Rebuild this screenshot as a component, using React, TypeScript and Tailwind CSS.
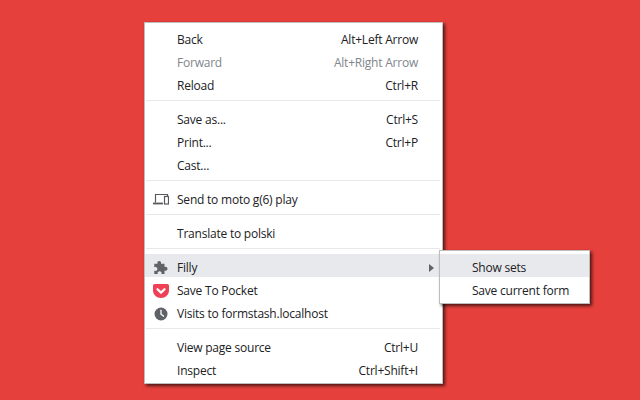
import { ReactNode } from 'react';

type Item = {
  label: string;
  shortcut?: string;
  disabled?: boolean;
  active?: boolean;
  icon?: ReactNode;
  arrow?: boolean;
};

const DeviceIcon = () => (
  <svg width="16" height="16" viewBox="0 0 16 16" fill="none" stroke="#55585c">
    <path d="M2.500 10.500V2.500H14.500V4" strokeWidth="1.200" />
    <path d="M0 11.500H10" strokeWidth="1.800" />
    <rect x="11.500" y="4.500" width="4" height="7.500" strokeWidth="1.200" />
  </svg>
);

const PuzzleIcon = () => (
  <svg width="16" height="16" viewBox="0 0 16 16" fill="#5f6368">
    <path d="M6.200 1c1.100 0 1.900.8 1.900 1.800 0 .3-.1.6-.2.9h3.600v3.300c.3-.2.7-.3 1.100-.3 1.100 0 1.900.9 1.900 2s-.8 2-1.900 2c-.4 0-.8-.1-1.100-.3v3.700H8.300c.2-.4.3-.7.3-1.100 0-1-.9-1.800-2-1.800s-2 .8-2 1.800c0 .4.100.7.300 1.100H1.300v-3.500c.3.200.7.300 1.100.300 1.100 0 2-.9 2-2s-.9-2-2-2c-.4 0-.8.100-1.100.300V3.700h3.300c-.1-.3-.2-.6-.2-.9C4.400 1.800 5.100 1 6.200 1z" />
  </svg>
);

const PocketIcon = () => (
  <svg width="16" height="16" viewBox="0 0 16 16">
    <path d="M1.800 1H14.200C15.200 1 16 1.800 16 2.800V7.500C16 11.800 12.400 15 8 15S0 11.800 0 7.500V2.800C0 1.800.8 1 1.800 1z" fill="#ef4056" />
    <path d="M4.500 6.200L8 9.600L11.500 6.200" fill="none" stroke="#fff" strokeWidth="2.200" strokeLinecap="round" strokeLinejoin="round" />
  </svg>
);

const ClockIcon = () => (
  <svg width="16" height="16" viewBox="0 0 16 16">
    <circle cx="8" cy="8" r="6.500" fill="#5f6368" />
    <path d="M8 3.800V8.300L11 10.600" fill="none" stroke="#fff" strokeWidth="1.300" />
  </svg>
);

const groups: Item[][] = [
  [
    { label: 'Back', shortcut: 'Alt+Left Arrow' },
    { label: 'Forward', shortcut: 'Alt+Right Arrow', disabled: true },
    { label: 'Reload', shortcut: 'Ctrl+R' },
  ],
  [
    { label: 'Save as...', shortcut: 'Ctrl+S' },
    { label: 'Print...', shortcut: 'Ctrl+P' },
    { label: 'Cast...' },
  ],
  [{ label: 'Send to moto g(6) play', icon: <DeviceIcon /> }],
  [{ label: 'Translate to polski' }],
  [
    { label: 'Filly', icon: <PuzzleIcon />, active: true, arrow: true },
    { label: 'Save To Pocket', icon: <PocketIcon /> },
    { label: 'Visits to formstash.localhost', icon: <ClockIcon /> },
  ],
  [
    { label: 'View page source', shortcut: 'Ctrl+U' },
    { label: 'Inspect', shortcut: 'Ctrl+Shift+I' },
  ],
];

function MenuRow({ item }: { item: Item }) {
  return (
    <div
      className={`flex h-[23px] items-center pl-[8px] pr-6 pt-[4px] ${item.active ? 'bg-[#e8e9ec]' : ''} ${
        item.disabled ? 'text-[#80868b]' : 'text-[#202124]'
      }`}
    >
      <div className="flex w-[24px] justify-start">{item.icon}</div>
      <span className="flex-1 whitespace-nowrap">{item.label}</span>
      {item.shortcut && <span className="whitespace-nowrap">{item.shortcut}</span>}
      {item.arrow && (
        <div className="mr-[-16px] h-0 w-0 border-y-[4px] border-l-[5px] border-y-transparent border-l-[#5f6368]" />
      )}
    </div>
  );
}

export default function App() {
  return (
    <div className="h-[400px] w-[640px] overflow-hidden bg-[#e5403c] pl-[144px] pt-[22px] font-['Open_Sans','Noto_Sans',sans-serif] text-[12px] tracking-[-0.22px]">
      <div className="relative w-[299px] border border-[#bdbdbd] bg-white py-[3px] shadow-[2px_2px_3px_rgba(0,0,0,0.65)]">
        {groups.map((group, i) => (
          <div key={i}>
            {i > 0 && (
              <div className="flex h-[11px] items-center pl-[1px] pr-[2px]">
                <div className="h-[1px] w-full bg-[#e8e8e8]" />
              </div>
            )}
            {group.map((item) => (
              <MenuRow key={item.label} item={item} />
            ))}
          </div>
        ))}

        <div className="absolute left-[294px] top-[227px] w-[151px] border border-[#bdbdbd] bg-white py-[3px] text-[#202124] shadow-[2px_2px_3px_rgba(0,0,0,0.65)]">
          <div className="flex h-[23px] items-center bg-[#e8e9ec] pl-[32px] pt-[4px]">Show sets</div>
          <div className="flex h-[23px] items-center pl-[32px] pt-[4px]">Save current form</div>
        </div>
      </div>
    </div>
  );
}
